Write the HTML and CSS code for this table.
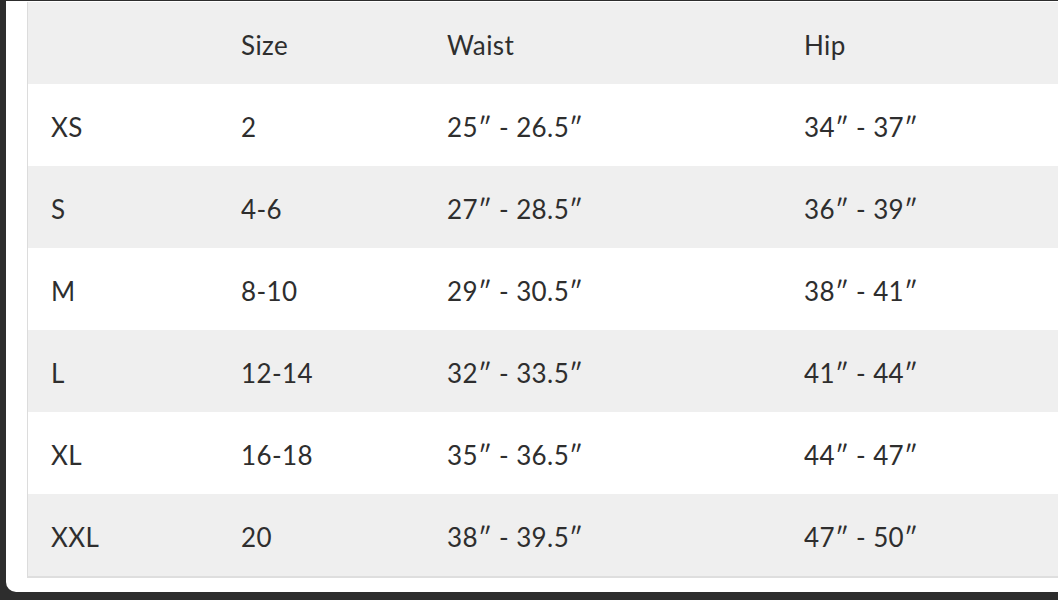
FILE: index.html
```html
<!DOCTYPE html>
<html>
<head>
<meta charset="utf-8">
<link rel="stylesheet" href="styles.css">
</head>
<body>
<div class="card">
  <div class="table">
    <div class="row head"><span></span><span>Size</span><span>Waist</span><span>Hip</span></div>
    <div class="row"><span>XS</span><span>2</span><span>25″ - 26.5″</span><span>34″ - 37″</span></div>
    <div class="row alt"><span>S</span><span>4-6</span><span>27″ - 28.5″</span><span>36″ - 39″</span></div>
    <div class="row"><span>M</span><span>8-10</span><span>29″ - 30.5″</span><span>38″ - 41″</span></div>
    <div class="row alt"><span>L</span><span>12-14</span><span>32″ - 33.5″</span><span>41″ - 44″</span></div>
    <div class="row"><span>XL</span><span>16-18</span><span>35″ - 36.5″</span><span>44″ - 47″</span></div>
    <div class="row alt"><span>XXL</span><span>20</span><span>38″ - 39.5″</span><span>47″ - 50″</span></div>
  </div>
</div>
</body>
</html>
```
FILE: styles.css
```css
html, body {
  margin: 0;
  padding: 0;
  height: 600px;
  overflow: hidden;
  background: #2d2d2d;
}
body {
  font-family: Lato, "Open Sans", sans-serif;
  color: #2e2e2e;
}
.card {
  margin: 1px 0 0 6px;
  height: 591px;
  box-sizing: border-box;
  background: #fff;
  border-radius: 0 0 0 10px;
  padding: 1px 0 0 21px;
}
.table {
  border-left: 1px solid #dcdcdc;
  border-bottom: 2px solid #dedede;
}
.row {
  display: grid;
  grid-template-columns: 190px 206px 357px 1fr;
  height: 82px;
  box-sizing: border-box;
  padding-top: 3px;
  align-items: center;
  font-size: 26px;
  letter-spacing: 0.4px;
}
.row span {
  padding-left: 23px;
}
.head, .alt {
  background: #efefef;
}
```
